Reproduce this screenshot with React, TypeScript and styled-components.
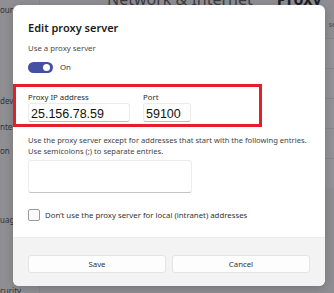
import React, { useState } from 'react';
import styled, { createGlobalStyle } from 'styled-components';

const GlobalStyle = createGlobalStyle`
	html, body {
		margin: 0;
		padding: 0;
		width: 334px;
		height: 293px;
		overflow: hidden;
		background: #8e8e92;
	}
	* {
		box-sizing: border-box;
	}
`

const sideItems = [
	{ label: "oun", top: 4 },
	{ label: "dev", top: 79 },
	{ label: "nter", top: 14 },
	{ label: "on", top: 12 },
	{ label: "uag", top: 57 },
	{ label: "curity", top: 59 },
];

export default function App() {
	const [enabled, setEnabled] = useState<boolean>(true);
	const [ip, setIp] = useState<string>("25.156.78.59");
	const [port, setPort] = useState<string>("59100");
	const [exceptions, setExceptions] = useState<string>("");
	const [local, setLocal] = useState<boolean>(false);

	return (
		<>
			<GlobalStyle />
			<Page>
				<Sidebar>
					{sideItems.map(item => (
						<SideItem key={item.label} $top={item.top}>{item.label}</SideItem>
					))}
				</Sidebar>
				<Main>
					<Header>
						<Crumb>Network &amp; Internet</Crumb>
						<CrumbCurrent>Proxy</CrumbCurrent>
					</Header>
					<RightHint>se</RightHint>
					<Rows>
						<Row />
						<Row />
						<Row />
						<Row />
						<Row />
					</Rows>
				</Main>

				<Dialog>
					<Body>
						<Title>Edit proxy server</Title>
						<Caption>Use a proxy server</Caption>
						<ToggleRow>
							<Toggle
								$on={enabled}
								onClick={() => setEnabled(!enabled)}
								title="Use a proxy server" />
							<ToggleText>{enabled ? "On" : "Off"}</ToggleText>
						</ToggleRow>

						<Highlight>
							<Field>
								<FieldLabel>Proxy IP address</FieldLabel>
								<TextInput
									$width={102}
									value={ip}
									onChange={e => setIp(e.target.value)} />
							</Field>
							<Field>
								<FieldLabel>Port</FieldLabel>
								<TextInput
									$width={48}
									value={port}
									onChange={e => setPort(e.target.value)} />
							</Field>
						</Highlight>

						<Description>
							Use the proxy server except for addresses that start with the following entries.<br />
							Use semicolons (;) to separate entries.
						</Description>
						<Exceptions
							value={exceptions}
							onChange={e => setExceptions(e.target.value)} />

						<CheckRow>
							<Check $checked={local} onClick={() => setLocal(!local)} />
							<CheckLabel>Don’t use the proxy server for local (intranet) addresses</CheckLabel>
						</CheckRow>
					</Body>
					<Footer>
						<Action>Save</Action>
						<Action>Cancel</Action>
					</Footer>
				</Dialog>
			</Page>
		</>
	);
}

const Page = styled.div`
	position: relative;
	display: flex;
	width: 334px;
	height: 293px;
	overflow: hidden;
	background: #8e8e92;
	font-family: "Noto Sans", "Open Sans", sans-serif;
`

const Sidebar = styled.div`
	display: flex;
	flex-direction: column;
	flex-shrink: 0;
	width: 40px;
	background: #8f8f93;
	border-right: 1px solid #88888c;
`

const SideItem = styled.div<{ $top: number }>`
	margin-top: ${props => props.$top}px;
	font-size: 8px;
	line-height: 12px;
	color: #323236;
	white-space: nowrap;
`

const Main = styled.div`
	position: relative;
	display: flex;
	flex-direction: column;
	flex: 1;
	min-width: 0;
`

const Header = styled.div`
	display: flex;
	align-items: flex-end;
	gap: 24px;
	height: 5px;
	padding-left: 67px;
	overflow: hidden;
	white-space: nowrap;
`

const Crumb = styled.span`
	font-size: 16px;
	line-height: 16px;
	color: #3c3c40;
	margin-bottom: -2px;
`

const CrumbCurrent = styled(Crumb)`
	font-weight: 700;
	color: #1e1e22;
`

const RightHint = styled.div`
	align-self: flex-end;
	margin-top: 15px;
	margin-right: -2px;
	font-size: 7px;
	line-height: 10px;
	color: #4a4a4e;
`

const Rows = styled.div`
	display: flex;
	flex-direction: column;
	margin-top: 8px;
`

const Row = styled.div`
	height: 30px;
	border-top: 1px solid #87878b;
	background: #929296;
`

const Dialog = styled.div`
	position: absolute;
	left: 13px;
	top: 5px;
	width: 312px;
	height: 281px;
	display: flex;
	flex-direction: column;
	background: #ffffff;
	border-radius: 6px;
	overflow: hidden;
	box-shadow: 0 2px 8px rgba(0, 0, 0, 0.18);
`

const Body = styled.div`
	display: flex;
	flex-direction: column;
	flex: 1;
	padding: 14px 15px 0 15px;
`

const Title = styled.div`
	font-size: 11px;
	line-height: 18px;
	font-weight: 600;
	color: #1b1b1b;
`

const Caption = styled.div`
	margin-top: 5px;
	font-size: 7.8px;
	line-height: 12px;
	color: #4a4a4a;
`

const ToggleRow = styled.div`
	display: flex;
	align-items: center;
	gap: 7px;
	margin-top: 8px;
	height: 11px;
`

const Toggle = styled.button<{ $on: boolean }>`
	position: relative;
	width: 25px;
	height: 11px;
	padding: 0;
	border: 0;
	border-radius: 6px;
	background: ${props => props.$on ? "#4451a0" : "#ffffff"};
	cursor: pointer;
	&::after {
		content: "";
		position: absolute;
		top: 2px;
		left: ${props => props.$on ? "15px" : "3px"};
		width: 7px;
		height: 7px;
		border-radius: 50%;
		background: ${props => props.$on ? "#ffffff" : "#555555"};
	}
`

const ToggleText = styled.span`
	font-size: 7.8px;
	line-height: 11px;
	color: #333333;
`

const Highlight = styled.div`
	display: flex;
	gap: 13px;
	margin: 11px 0 0 -15px;
	width: 249px;
	height: 43px;
	padding: 5px 0 0 12px;
	border: 3px solid #e3202a;
`

const Field = styled.div`
	display: flex;
	flex-direction: column;
`

const FieldLabel = styled.div`
	font-size: 7.8px;
	line-height: 11px;
	color: #2a2a2a;
`

const TextInput = styled.input<{ $width: number }>`
	width: ${props => props.$width}px;
	height: 19px;
	padding: 2px 2px 0 2px;
	border: 1px solid #ececec;
	border-bottom-color: #bdbdbd;
	border-radius: 3px;
	background: #ffffff;
	font-family: "Liberation Sans", Arial, sans-serif;
	font-size: 12.5px;
	color: #111111;
	outline: none;
`

const Description = styled.div`
	margin-top: 8px;
	font-size: 7.6px;
	line-height: 11px;
	color: #444444;
	white-space: nowrap;
`

const Exceptions = styled.textarea`
	margin-top: 3px;
	width: 164px;
	height: 33px;
	border: 1px solid #ececec;
	border-bottom-color: #c4c4c4;
	border-radius: 3px;
	resize: none;
	outline: none;
	background: #ffffff;
`

const CheckRow = styled.div`
	display: flex;
	align-items: center;
	gap: 5px;
	margin-top: 16px;
`

const Check = styled.div<{ $checked: boolean }>`
	width: 12px;
	height: 12px;
	border: 1px solid #9a9a9a;
	border-radius: 2px;
	background: ${props => props.$checked ? "#4451a0" : "#fbfbfb"};
	cursor: pointer;
`

const CheckLabel = styled.span`
	font-size: 7.8px;
	line-height: 12px;
	color: #333333;
`

const Footer = styled.div`
	display: flex;
	gap: 6px;
	height: 49px;
	padding: 17px 15px 0 15px;
	background: #f3f3f3;
	border-top: 1px solid #ececec;
`

const Action = styled.button`
	flex: 1;
	height: 18px;
	padding: 0;
	border: 1px solid #e4e4e4;
	border-radius: 3px;
	background: #fdfdfd;
	font-family: "Noto Sans", "Open Sans", sans-serif;
	font-size: 7.8px;
	color: #333333;
	cursor: pointer;
`
